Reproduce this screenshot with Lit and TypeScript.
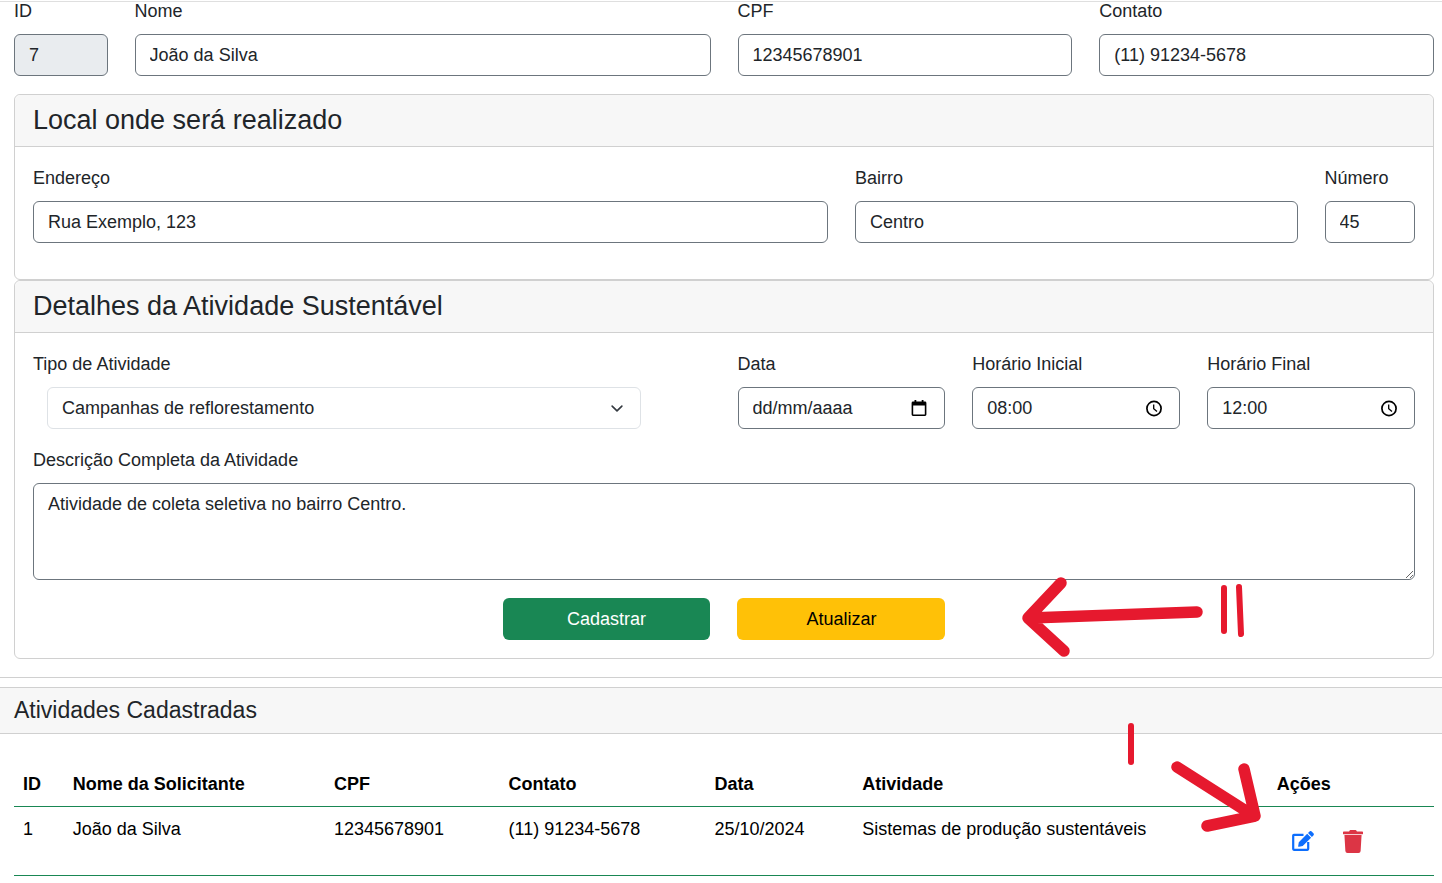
import { LitElement, html, css, svg } from "lit";
import { customElement, state } from "lit/decorators.js";

interface Activity {
  id: number;
  name: string;
  cpf: string;
  contact: string;
  date: string;
  activity: string;
}

const calendarIcon = svg`
  <path fill-rule="evenodd" d="M3.500 0h1.800v1.600h5.400V0h1.800v1.600h1.500a1.400 1.400 0 0 1 1.400 1.400v11.600a1.400 1.400 0 0 1-1.400 1.400H2a1.400 1.400 0 0 1-1.400-1.400V3A1.400 1.400 0 0 1 2 1.600h1.500zM2.200 5.500v9h11.600v-9z"/>`;

const clockIcon = svg`
  <circle cx="8" cy="8.500" r="7.100" fill="none" stroke="currentColor" stroke-width="1.700"/>
  <path d="M7.700 4.500v4.300l3.300 2.800" fill="none" stroke="currentColor" stroke-width="1.300"/>`;

@customElement("app-root")
export class AppRoot extends LitElement {
  @state() private activities: Activity[] = [
    {
      id: 1,
      name: "João da Silva",
      cpf: "12345678901",
      contact: "(11) 91234-5678",
      date: "25/10/2024",
      activity: "Sistemas de produção sustentáveis",
    },
  ];

  static styles = css`
    :host {
      display: block;
      position: relative;
      background: #fff;
      color: #212529;
      font-family: "Liberation Sans", Arial, sans-serif;
      font-size: 18px;
      line-height: 26px;
      padding-top: 1px;
    }
    * { box-sizing: border-box; }
    .panel {
      border-top: 1px solid #dfdfdf;
      border-bottom: 1px solid #d0d0d0;
      padding: 0 8px 18px 14px;
      margin-bottom: 9px;
    }
    .row {
      display: grid;
      grid-template-columns: repeat(12, minmax(0, 1fr));
      column-gap: 27px;
      margin-bottom: 18px;
    }
    .c1 { grid-column: span 1; }
    .c2 { grid-column: span 2; }
    .c3 { grid-column: span 3; }
    .c4 { grid-column: span 4; }
    .c5 { grid-column: span 5; }
    .c6 { grid-column: span 6; }
    .c7 { grid-column: span 7; }
    .c12 { grid-column: span 12; }
    .field { display: flex; flex-direction: column; }
    .label { margin-bottom: 10px; }
    .row-top .label { line-height: 18px; margin-bottom: 14px; }
    .control {
      display: block;
      width: 100%;
      margin: 0;
      padding: 7px 14px;
      border: 1px solid #6c757d;
      border-radius: 6px;
      background: #fff;
      color: inherit;
      font: inherit;
      outline: none;
    }
    input.control { height: 42px; }
    input.control[readonly] { background: #e9ecef; }
    .select {
      appearance: none;
      height: 42px;
      width: auto;
      margin: 0 70px 0 14px;
      border-color: #dee2e6;
      background: #fff url("data:image/svg+xml,%3csvg xmlns='http://www.w3.org/2000/svg' viewBox='0 0 16 16'%3e%3cpath fill='none' stroke='%23343a40' stroke-linecap='round' stroke-linejoin='round' stroke-width='2' d='m2 5 6 6 6-6'/%3e%3c/svg%3e") no-repeat right 14px center / 18px 13px;
    }
    textarea.control { line-height: 27px; resize: vertical; }
    .picker { display: flex; align-items: center; height: 42px; padding: 0 17px 0 14px; }
    .picker input {
      flex: 1;
      min-width: 0;
      padding: 0;
      border: 0;
      outline: none;
      background: none;
      color: inherit;
      font: inherit;
    }
    .picker input::placeholder { color: inherit; opacity: 1; }
    .picker button { display: flex; padding: 0; border: 0; background: none; color: #000; }
    .card { border: 1px solid #d0d0d0; border-radius: 6px; }
    .card-head {
      margin: 0;
      padding: 9px 18px;
      border-bottom: 1px solid #d0d0d0;
      border-radius: 6px 6px 0 0;
      background: #f7f7f7;
      font-size: 27px;
      line-height: 33px;
      font-weight: 400;
    }
    .card-body { padding: 18px; }
    .row.flush { margin-bottom: 0; }
    .btn {
      height: 42px;
      border: 0;
      border-radius: 6px;
      padding: 0;
      font: inherit;
    }
    .btn-save { grid-column: 5 / span 2; background: #198754; color: #fff; }
    .btn-update { grid-column: 7 / span 2; background: #ffc107; color: #000; }
    .list-head {
      margin: 0;
      padding: 9px 14px;
      border-top: 1px solid #d0d0d0;
      border-bottom: 1px solid #d0d0d0;
      background: #f7f7f7;
      font-size: 23px;
      line-height: 27px;
      font-weight: 400;
    }
    .list-body { padding: 28px 8px 6px 14px; }
    table {
      width: 100%;
      border-collapse: separate;
      border-spacing: 0;
      table-layout: fixed;
      color: #000;
    }
    th, td {
      padding: 9px;
      border-bottom: 1px solid #198754;
      text-align: left;
      vertical-align: top;
      white-space: nowrap;
    }
    .w-id { width: 3.5%; }
    .w-name { width: 18.4%; }
    .w-cpf { width: 12.3%; }
    .w-contact { width: 14.5%; }
    .w-date { width: 10.4%; }
    .w-activity { width: 29.2%; }
    .w-actions { width: 11.7%; }
    .actions { display: flex; }
    .icon-btn {
      display: flex;
      align-items: center;
      height: 50px;
      padding: 0 14px;
      border: 0;
      background: none;
    }
    .edit { color: #0d6efd; }
    .remove { color: #dc3545; }
    .marks {
      position: absolute;
      top: 0;
      left: 0;
      pointer-events: none;
      fill: none;
      stroke: #e6192e;
      stroke-linecap: round;
      stroke-linejoin: round;
    }
  `;

  private input(id: string, label: string, value: string, col: string, readonly = false) {
    return html`<div class="field ${col}">
      <label class="label" for=${id}>${label}</label>
      <input class="control" id=${id} type="text" .value=${value} ?readonly=${readonly} />
    </div>`;
  }

  private picker(id: string, label: string, value: string, hint: string, icon: unknown) {
    return html`<div class="field c2">
      <label class="label" for=${id}>${label}</label>
      <div class="control picker">
        <input id=${id} type="text" .value=${value} placeholder=${hint} />
        <button type="button" aria-label=${label}>
          <svg width="16" height="17" viewBox="0 0 16 17" fill="currentColor">${icon}</svg>
        </button>
      </div>
    </div>`;
  }

  render() {
    return html`
      <form class="panel" @submit=${(e: Event) => e.preventDefault()}>
        <div class="row row-top">
          ${this.input("id", "ID", "7", "c1", true)}
          ${this.input("nome", "Nome", "João da Silva", "c5")}
          ${this.input("cpf", "CPF", "12345678901", "c3")}
          ${this.input("contato", "Contato", "(11) 91234-5678", "c3")}
        </div>
        <section class="card">
          <h4 class="card-head">Local onde será realizado</h4>
          <div class="card-body">
            <div class="row">
              ${this.input("endereco", "Endereço", "Rua Exemplo, 123", "c7")}
              ${this.input("bairro", "Bairro", "Centro", "c4")}
              ${this.input("numero", "Número", "45", "c1")}
            </div>
          </div>
        </section>
        <section class="card">
          <h4 class="card-head">Detalhes da Atividade Sustentável</h4>
          <div class="card-body">
            <div class="row">
              <div class="field c6">
                <label class="label" for="tipo">Tipo de Atividade</label>
                <select class="control select" id="tipo">
                  <option>Campanhas de reflorestamento</option>
                  <option>Sistemas de produção sustentáveis</option>
                </select>
              </div>
              ${this.picker("data", "Data", "", "dd/mm/aaaa", calendarIcon)}
              ${this.picker("inicio", "Horário Inicial", "08:00", "", clockIcon)}
              ${this.picker("fim", "Horário Final", "12:00", "", clockIcon)}
            </div>
            <div class="row">
              <div class="field c12">
                <label class="label" for="descricao">Descrição Completa da Atividade</label>
                <textarea class="control" id="descricao" rows="3" .value=${"Atividade de coleta seletiva no bairro Centro."}></textarea>
              </div>
            </div>
            <div class="row flush">
              <button class="btn btn-save" type="submit">Cadastrar</button>
              <button class="btn btn-update" type="button">Atualizar</button>
            </div>
          </div>
        </section>
      </form>

      <section>
        <h5 class="list-head">Atividades Cadastradas</h5>
        <div class="list-body">
          <table>
            <thead>
              <tr>
                <th class="w-id">ID</th>
                <th class="w-name">Nome da Solicitante</th>
                <th class="w-cpf">CPF</th>
                <th class="w-contact">Contato</th>
                <th class="w-date">Data</th>
                <th class="w-activity">Atividade</th>
                <th class="w-actions">Ações</th>
              </tr>
            </thead>
            <tbody>
              ${this.activities.map(
                (a) => html`<tr>
                  <td>${a.id}</td>
                  <td>${a.name}</td>
                  <td>${a.cpf}</td>
                  <td>${a.contact}</td>
                  <td>${a.date}</td>
                  <td>${a.activity}</td>
                  <td>
                    <div class="actions">
                      <button class="icon-btn edit" type="button" aria-label="Editar">
                        <svg width="24" height="21" viewBox="0 0 24 21" fill="none">
                          <path d="M12.500 3.800H2.900a.7.7 0 0 0-.7.7v13.600a.7.7 0 0 0 .7.7h13.600a.7.7 0 0 0 .7-.7V11" stroke="currentColor" stroke-width="2.200"/>
                          <path d="M7.800 11.200 16.200 2.800l3.900 3.900-8.400 8.400-3.700.6a.7.7 0 0 1-.8-.8zM17 2l1.500-1.500a1.600 1.600 0 0 1 2.200 0l1.700 1.700a1.600 1.600 0 0 1 0 2.200L20.900 5.900z" fill="currentColor"/>
                        </svg>
                      </button>
                      <button class="icon-btn remove" type="button" aria-label="Excluir">
                        <svg width="20" height="23" viewBox="0 0 448 512" fill="currentColor">
                          <path d="M432 32H312l-9.400-18.700A24 24 0 0 0 281.100 0H166.800a23.720 23.720 0 0 0-21.400 13.300L136 32H16A16 16 0 0 0 0 48v32a16 16 0 0 0 16 16h416a16 16 0 0 0 16-16V48a16 16 0 0 0-16-16zM32 112l21.200 355a48 48 0 0 0 47.900 45h245.800a48 48 0 0 0 47.900-45L416 112z"/>
                        </svg>
                      </button>
                    </div>
                  </td>
                </tr>`
              )}
            </tbody>
          </table>
        </div>
      </section>

      <svg class="marks" width="1300" height="860" viewBox="0 0 1300 860" aria-hidden="true">
        <g stroke-width="11.500">
          <path d="M1061 583L1028 618L1064 651M1030 618L1197 612"/>
          <path d="M1177 767L1254 816M1244 769L1255 816L1207 826"/>
        </g>
        <g stroke-width="6">
          <path d="M1224 588V631M1239 587L1241 634M1131 726V762"/>
        </g>
      </svg>
    `;
  }
}
